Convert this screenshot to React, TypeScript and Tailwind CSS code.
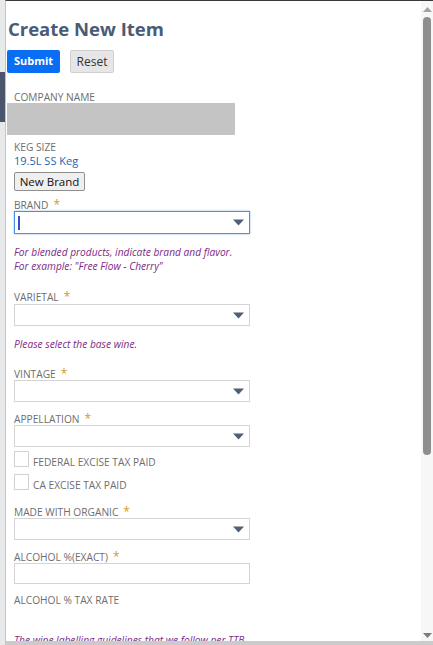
const font = { fontFamily: '"Open Sans", "Noto Sans", sans-serif' };

function Label({ text, req, className = '' }: { text: string; req?: boolean; className?: string }) {
  return (
    <div className={`h-[14px] leading-[14px] text-[10.2px] text-[#6e6e6e] uppercase overflow-visible ${className}`}>
      {text}
      {req && <span className="ml-[5px] text-[#d39b1f] text-[12px] leading-[14px]">*</span>}
    </div>
  );
}

function Arrow() {
  return (
    <svg width="11" height="7" viewBox="0 0 11 7" className="shrink-0">
      <path d="M0 0.5 H11 L5.5 6.5 Z" fill="#4f5f78" />
    </svg>
  );
}

function Select({ focus, className = '', h = 'h-[22px]' }: { focus?: boolean; className?: string; h?: string }) {
  return (
    <div
      className={`w-[236px] ${h} flex items-center justify-between pl-[3px] pr-[5px] bg-white ${
        focus
          ? 'border border-[#4a8fe0] shadow-[0_0_2px_rgba(74,143,224,0.6)]'
          : 'border border-[#d4d4d4]'
      } ${className}`}
    >
      {focus ? <span className="w-[2px] h-[14px] bg-[#2a54c4]" /> : <span />}
      <Arrow />
    </div>
  );
}

function Check({ text, className = '' }: { text: string; className?: string }) {
  return (
    <div className={`flex items-start h-[16px] ${className}`}>
      <span className="w-[15px] h-[16px] border border-[#d2d2d2] bg-white" />
      <span className="ml-[4px] mt-[4px] text-[10.2px] leading-[14px] text-[#6e6e6e]">{text}</span>
    </div>
  );
}

function Help({ children, className = '' }: { children: React.ReactNode; className?: string }) {
  return <div className={`text-[10.2px] leading-[14px] italic text-[#7d2a86] ${className}`}>{children}</div>;
}

function Scrollbar() {
  return (
    <div className="w-[12px] bg-[#f7f7f7] flex flex-col items-center">
      <svg width="9" height="5" viewBox="0 0 9 5" className="mt-[6px]">
        <path d="M0 5 L4.5 0 L9 5 Z" fill="#a3a3a3" />
      </svg>
      <div className="mt-[5px] w-[8px] h-[438px] rounded-full bg-[#8e8e8e]" />
      <div className="flex-1" />
      <svg width="9" height="5" viewBox="0 0 9 5" className="mb-[3px]">
        <path d="M0 0 L9 0 L4.5 5 Z" fill="#7b7b7b" />
      </svg>
    </div>
  );
}

export default function App() {
  return (
    <div className="w-[433px] h-[645px] flex bg-[#e8e9eb] overflow-hidden" style={font}>
      {/* page behind the dialog */}
      <div className="w-[5px] flex flex-col">
        <div className="h-[72px]" />
        <div className="h-[50px] bg-[#4b566d]" />
      </div>

      <div className="flex-1 flex flex-col border-t border-[#3a3a3a] border-l border-l-[#c4c4c4]">
        <div className="flex-1 flex min-h-0 bg-white">
          <div className="flex-1 overflow-hidden">
            <h1 className="mt-[15px] ml-[2px] h-[26px] leading-[26px] text-[18.5px] font-bold text-[#4b5b76]">
              Create New Item
            </h1>

            <div className="mt-[8px] ml-[1px] flex gap-[10px]">
              <button className="w-[53px] h-[23px] rounded-[2px] bg-[#0a6ef5] text-white text-[11px] font-bold">
                Submit
              </button>
              <button className="w-[44px] h-[23px] rounded-[2px] bg-[#e6e6e6] border border-[#cfcfcf] text-[12px] text-[#333]">
                Reset
              </button>
            </div>

            <Label text="Company Name" className="mt-[17px] ml-[8px]" />
            <div className="mt-[-1px] ml-[1px] w-[228px] h-[32px] bg-[#c4c4c4]" />

            <div className="ml-[8px]">
              <Label text="Keg Size" className="mt-[5px]" />
              <div className="h-[16px] leading-[16px] text-[11px] text-[#2563b0] mt-[-1px]">19.5L SS Keg</div>
              <button className="block mt-[3px] w-[71px] h-[19px] leading-[17px] bg-[#efefef] border border-[#8f8f8f] rounded-[2px] text-[11.5px] text-[#111]">
                New Brand
              </button>

              <Label text="Brand" req className="mt-[7px]" />
              <Select focus h="h-[23px]" className="mt-[-1px]" />
              <Help className="mt-[11px]">
                For blended products, indicate brand and flavor.
                <br />
                For example: "Free Flow - Cherry"
              </Help>

              <Label text="Varietal" req className="mt-[17px]" />
              <Select className="mt-[0px]" />
              <Help className="mt-[11px]">Please select the base wine.</Help>

              <Label text="Vintage" req className="mt-[16px]" />
              <Select className="mt-[-1px]" />

              <Label text="Appellation" req className="mt-[10px]" />
              <Select className="mt-[-1px]" />

              <Check text="FEDERAL EXCISE TAX PAID" className="mt-[4px]" />
              <Check text="CA EXCISE TAX PAID" className="mt-[7px]" />

              <Label text="Made with Organic" req className="mt-[15px]" />
              <Select className="mt-[-1px]" />

              <Label text="Alcohol %(Exact)" req className="mt-[10px]" />
              <div className="mt-[-1px] w-[236px] h-[21px] border border-[#d4d4d4] bg-white" />

              <Label text="Alcohol % Tax Rate" className="mt-[9px]" />
              <Help className="mt-[26px] underline">The wine labelling guidelines that we follow per TTB</Help>
            </div>
          </div>
          <Scrollbar />
        </div>
        <div className="h-[4px] bg-[#cbcbcb]" />
      </div>
    </div>
  );
}
